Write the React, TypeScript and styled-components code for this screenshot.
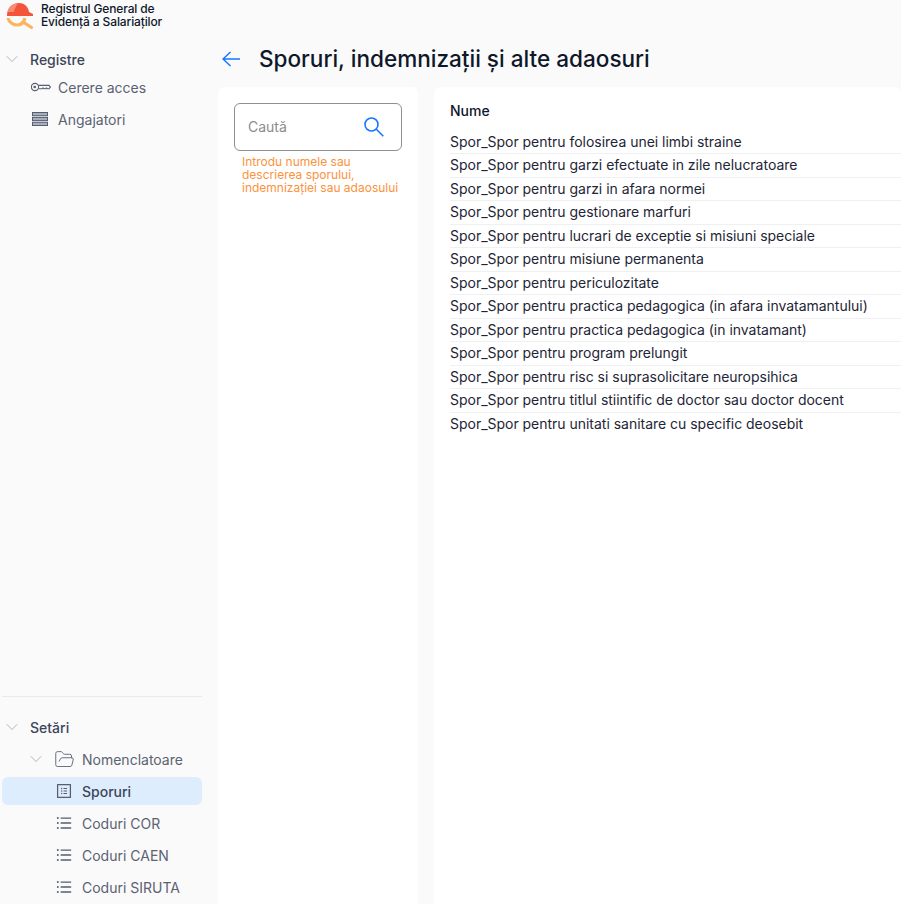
import React from 'react';
import styled, { createGlobalStyle } from 'styled-components';
import { AiOutlineBars, AiOutlineProfile } from 'react-icons/ai';
import { ChevronDown, FolderOpen } from 'lucide-react';

const GlobalStyle = createGlobalStyle`
    html, body {
        margin: 0;
        padding: 0;
        height: 904px;
        overflow: hidden;
        background: #fafafa;
        font-family: Inter, "Liberation Sans", sans-serif;
    }
`;

const Page = styled.div`
    display: flex;
    width: 901px;
    height: 904px;
    overflow: hidden;
    background: #fafafa;
`;

const Sidebar = styled.aside`
    width: 218px;
    flex: none;
    height: 904px;
    display: flex;
    flex-direction: column;
    box-sizing: border-box;
    padding: 0 16px 0 2px;
`;

const Brand = styled.div`
    display: flex;
    align-items: center;
    gap: 7px;
    height: 29px;
    padding-left: 4px;
`;

const BrandName = styled.div`
    font-size: 12px;
    line-height: 13px;
    font-weight: 500;
    color: #0f172a;
    letter-spacing: -0.13px;
`;

const Nav = styled.nav`
    display: flex;
    flex-direction: column;
    gap: 4px;
`;

const TopNav = styled(Nav)`
    margin-top: 16px;
    & > :first-child {
        margin-bottom: -4px;
    }
`;

const BottomNav = styled(Nav)`
    margin-top: auto;
    border-top: 1px solid #e9e9ea;
    padding-top: 16px;
    margin-bottom: 3px;
`;

const Item = styled.div<{ $level: number; $active?: boolean; $group?: boolean }>`
    height: 28px;
    display: flex;
    align-items: center;
    flex: none;
    box-sizing: border-box;
    padding-left: ${(props) => props.$level}px;
    border-radius: 6px;
    font-size: 14px;
    font-weight: ${(props) => (props.$group || props.$active ? 500 : 400)};
    color: ${(props) => (props.$group || props.$active ? '#3d4559' : '#5b6272')};
    background: ${(props) => (props.$active ? '#deedfd' : 'transparent')};
`;

const Caret = styled.span`
    width: 28px;
    flex: none;
    display: flex;
    color: #a3a7ae;
`;

const Glyph = styled.span<{ $width: number }>`
    width: ${(props) => props.$width}px;
    flex: none;
    display: flex;
    color: #565e70;
    font-size: 18px;
`;

const Main = styled.main`
    flex: 1;
    min-width: 0;
    display: flex;
    flex-direction: column;
`;

const TitleBar = styled.header`
    height: 87px;
    flex: none;
    box-sizing: border-box;
    padding: 41px 0 11px 4px;
    display: flex;
    align-items: center;
`;

const Back = styled.span`
    display: flex;
    color: #1677ff;
    width: 37px;
    flex: none;
`;

const Title = styled.h1`
    margin: 0;
    font-size: 22.56px;
    line-height: 32px;
    font-weight: 500;
    color: #0f172a;
    white-space: nowrap;
`;

const Columns = styled.div`
    flex: 1;
    display: flex;
    gap: 16px;
    min-height: 0;
`;

const Panel = styled.section`
    background: #fff;
    border-radius: 6px 6px 0 0;
`;

const FilterPanel = styled(Panel)`
    width: 200px;
    flex: none;
    box-sizing: border-box;
    padding: 16px;
`;

const SearchBox = styled.div`
    height: 48px;
    box-sizing: border-box;
    border: 1px solid #8f8f8f;
    border-radius: 6px;
    display: flex;
    align-items: center;
    justify-content: space-between;
    padding: 0 17px 1px 13px;
    font-size: 14px;
    color: #8c8c8c;
`;

const SearchIcon = styled.span`
    display: flex;
    color: #1677ff;
`;

const Hint = styled.p`
    margin: 4px 0 0 8px;
    font-size: 12px;
    line-height: 13px;
    color: #fb923c;
`;

const ListPanel = styled(Panel)`
    flex: 1;
    min-width: 0;
    padding: 13px 0 0 16px;
`;

const ListTitle = styled.div`
    font-size: 14px;
    line-height: 22px;
    font-weight: 500;
    color: #0f172a;
    margin-bottom: 8.5px;
`;

const Row = styled.div`
    height: 23.5px;
    box-sizing: border-box;
    font-size: 14px;
    line-height: 22px;
    letter-spacing: -0.02px;
    color: #1e2536;
    white-space: nowrap;
    border-bottom: 1px solid #eef0f3;
    &:last-child {
        border-bottom: none;
    }
`;

const rows = [
    'Spor_Spor pentru folosirea unei limbi straine',
    'Spor_Spor pentru garzi efectuate in zile nelucratoare',
    'Spor_Spor pentru garzi in afara normei',
    'Spor_Spor pentru gestionare marfuri',
    'Spor_Spor pentru lucrari de exceptie si misiuni speciale',
    'Spor_Spor pentru misiune permanenta',
    'Spor_Spor pentru periculozitate',
    'Spor_Spor pentru practica pedagogica (in afara invatamantului)',
    'Spor_Spor pentru practica pedagogica (in invatamant)',
    'Spor_Spor pentru program prelungit',
    'Spor_Spor pentru risc si suprasolicitare neuropsihica',
    'Spor_Spor pentru titlul stiintific de doctor sau doctor docent',
    'Spor_Spor pentru unitati sanitare cu specific deosebit',
];

const Logo = () => (
    <svg width="28" height="28" viewBox="0 0 28 28" fill="none">
        <path d="M2 17C3 22 8 24 11 24C15 24 18 21 19 17" stroke="#fcb55f" strokeWidth="3.2" />
        <path d="M17 21L25.500 26.500" stroke="#fcb55f" strokeWidth="3.2" strokeLinecap="round" />
        <path d="M1 15C1 7 6 2 13 2C19 2 22.500 6.500 23 11L27 13V15Z" fill="#f4553a" />
        <path d="M1.500 11C3 6 7 2.500 12 2C10 5 8.500 8 8 11Z" fill="#fb8b74" />
    </svg>
);

const KeyIcon = () => (
    <svg width="20" height="18" viewBox="0 0 20 18" fill="none" stroke="currentColor" strokeWidth="1.1">
        <circle cx="4" cy="9" r="3.600" />
        <circle cx="3.700" cy="9" r="0.800" />
        <path d="M7.500 7.400H18L19.400 9.200L18 10.800H16.400L15.400 10L14.400 10.800H13L12 10L11 10.800H7.500" />
    </svg>
);

const StackIcon = () => (
    <svg width="16" height="14" viewBox="0 0 16 14" fill="#a9aebb" stroke="currentColor">
        <rect x="0.500" y="0.500" width="15" height="3.200" />
        <rect x="0.500" y="5.400" width="15" height="3.200" />
        <rect x="0.500" y="10.300" width="15" height="3.200" />
    </svg>
);

const BackArrow = () => (
    <svg width="18" height="16" viewBox="0 0 18 16" fill="none" stroke="currentColor" strokeWidth="1.5">
        <path d="M1 8H18M8.500 1L1 8L8.500 15" />
    </svg>
);

const Lens = () => (
    <svg width="20" height="20" viewBox="0 0 20 20" fill="none" stroke="currentColor" strokeWidth="1.6">
        <circle cx="7.500" cy="7.500" r="6.500" />
        <path d="M12.300 12.300L19.300 19.300" />
    </svg>
);

export default function App() {
    return (
        <Page>
            <GlobalStyle />
            <Sidebar>
                <Brand>
                    <Logo />
                    <BrandName>
                        Registrul General de
                        <br />
                        Evidență a Salariaților
                    </BrandName>
                </Brand>
                <TopNav>
                    <Item $level={0} $group>
                        <Caret>
                            <ChevronDown size={20} strokeWidth={1} />
                        </Caret>
                        Registre
                    </Item>
                    <Item $level={29}>
                        <Glyph $width={27}>
                            <KeyIcon />
                        </Glyph>
                        Cerere acces
                    </Item>
                    <Item $level={30}>
                        <Glyph $width={26}>
                            <StackIcon />
                        </Glyph>
                        Angajatori
                    </Item>
                </TopNav>
                <BottomNav>
                    <Item $level={0} $group>
                        <Caret>
                            <ChevronDown size={20} strokeWidth={1} />
                        </Caret>
                        Setări
                    </Item>
                    <Item $level={24}>
                        <Caret>
                            <ChevronDown size={20} strokeWidth={1} />
                        </Caret>
                        <Glyph $width={28}>
                            <FolderOpen size={21} strokeWidth={1} />
                        </Glyph>
                        Nomenclatoare
                    </Item>
                    <Item $level={53} $active>
                        <Glyph $width={27}>
                            <AiOutlineProfile />
                        </Glyph>
                        Sporuri
                    </Item>
                    <Item $level={53}>
                        <Glyph $width={27}>
                            <AiOutlineBars />
                        </Glyph>
                        Coduri COR
                    </Item>
                    <Item $level={53}>
                        <Glyph $width={27}>
                            <AiOutlineBars />
                        </Glyph>
                        Coduri CAEN
                    </Item>
                    <Item $level={53}>
                        <Glyph $width={27}>
                            <AiOutlineBars />
                        </Glyph>
                        Coduri SIRUTA
                    </Item>
                </BottomNav>
            </Sidebar>
            <Main>
                <TitleBar>
                    <Back>
                        <BackArrow />
                    </Back>
                    <Title>Sporuri, indemnizații și alte adaosuri</Title>
                </TitleBar>
                <Columns>
                    <FilterPanel>
                        <SearchBox>
                            Caută
                            <SearchIcon>
                                <Lens />
                            </SearchIcon>
                        </SearchBox>
                        <Hint>Introdu numele sau descrierea sporului, indemnizației sau adaosului</Hint>
                    </FilterPanel>
                    <ListPanel>
                        <ListTitle>Nume</ListTitle>
                        <div>
                            {rows.map((row) => (
                                <Row key={row}>{row}</Row>
                            ))}
                        </div>
                    </ListPanel>
                </Columns>
            </Main>
        </Page>
    );
}
